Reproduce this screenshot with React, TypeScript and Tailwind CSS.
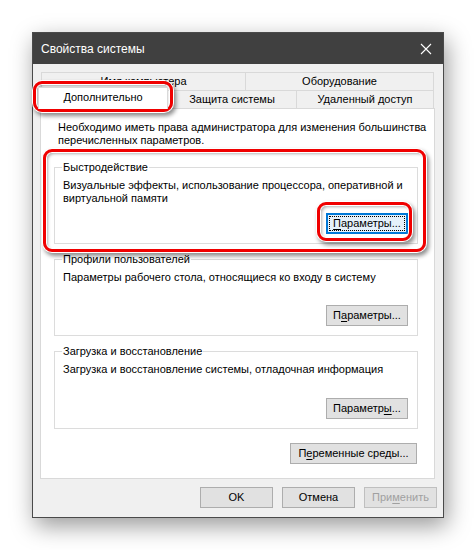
import React from 'react';

const font = { fontFamily: '"Liberation Sans", Arial, sans-serif' };

const Btn = ({
  children,
  className = '',
  focused = false,
  disabled = false,
}: {
  children: React.ReactNode;
  className?: string;
  focused?: boolean;
  disabled?: boolean;
}) => (
  <div
    className={`relative flex items-center justify-center h-[21px] text-[11px] leading-none whitespace-nowrap ${
      focused ? 'border-2 border-[#0078d7] bg-[#e5f1fb]' : 'border border-[#adadad] bg-[#e1e1e1]'
    } ${disabled ? 'text-[#a0a0a0] border-[#bfbfbf] bg-[#cccccc]' : 'text-black'} ${className}`}
  >
    {focused && <span className="absolute inset-[1px] border border-dotted border-black" />}
    <span className="relative">{children}</span>
  </div>
);

const U = ({ children }: { children: React.ReactNode }) => <span className="underline underline-offset-2">{children}</span>;

const Group = ({
  title,
  text,
  button,
  className = '',
}: {
  title: string;
  text: React.ReactNode;
  button: React.ReactNode;
  className?: string;
}) => (
  <div className={`relative w-[364px] border border-[#dcdcdc] flex flex-col pl-[8px] pr-[9px] pt-[11px] pb-[9px] ${className}`}>
    <span className="absolute -top-[8px] left-[7px] px-[1px] bg-white text-[11px] leading-[14px] text-black whitespace-nowrap">{title}</span>
    <div className="text-[11px] leading-[13px] text-black whitespace-nowrap">{text}</div>
    <div className="mt-auto self-end">{button}</div>
  </div>
);

const RedBox = ({ className }: { className: string }) => (
  <div
    className={`absolute rounded-[9px] border-[3px] border-[#f00000] shadow-[0_0_0_1px_#fff,inset_0_0_0_1px_#fff,2px_3px_4px_1px_rgba(0,0,0,0.45),inset_2px_2px_3px_rgba(0,0,0,0.3)] ${className}`}
  />
);

export default function App() {
  return (
    <div className="relative w-[476px] h-[550px] bg-white overflow-hidden" style={font}>
      <div className="ml-[32px] pt-[32px]">
        <div className="w-[412px] h-[486px] border border-[#4a4a4a] bg-[#f0f0f0] flex flex-col shadow-[3px_8px_22px_rgba(0,0,0,0.4)]">
          {/* Title bar */}
          <div className="h-[31px] bg-[#404040] flex items-center justify-between pl-[8px] pr-[10px]">
            <span className="text-white text-[12px]">Свойства системы</span>
            <svg width="12" height="12" viewBox="0 0 12 12" className="mr-[1px]">
              <path d="M1 1L11 11M11 1L1 11" stroke="#ffffff" strokeWidth="1.1" />
            </svg>
          </div>

          {/* Tabs */}
          <div className="pt-[8px] pl-[8px]">
            <div className="flex h-[18px] w-[393px] text-[11px] text-black">
              <div className="w-[204px] border-l border-t border-[#d9d9d9] flex items-center justify-center">Имя компьютера</div>
              <div className="flex-1 border-l border-t border-r border-[#d9d9d9] flex items-center justify-center">Оборудование</div>
            </div>
            <div className="relative flex h-[18px] w-[393px] text-[11px] text-black">
              <div className="w-[126px] border-l border-t border-[#d9d9d9]" />
              <div className="w-[129px] border-l border-t border-[#d9d9d9] flex items-center justify-center">Защита системы</div>
              <div className="flex-1 border-l border-t border-r border-[#d9d9d9] flex items-center justify-center">Удаленный доступ</div>
              <div className="absolute -left-[3px] -top-[3px] w-[130px] h-[22px] bg-white border-l border-t border-r border-[#d9d9d9] z-10 flex items-center justify-center pb-[2px]">
                Дополнительно
              </div>
            </div>
          </div>

          {/* Panel */}
          <div className="ml-[7px] w-[395px] h-[371px] bg-white border border-[#d9d9d9] pl-[13px] pt-[12px] flex flex-col">
            <p className="pl-[4px] text-[11px] leading-[13px] text-black whitespace-nowrap">
              Необходимо иметь права администратора для изменения большинства
              <br />
              перечисленных параметров.
            </p>
            <Group
              className="mt-[20px] h-[77px]"
              title="Быстродействие"
              text={
                <>
                  Визуальные эффекты, использование процессора, оперативной и
                  <br />
                  виртуальной памяти
                </>
              }
              button={
                <Btn focused className="w-[82px]">
                  <U>П</U>араметры...
                </Btn>
              }
            />
            <Group
              className="mt-[15px] h-[77px]"
              title="Профили пользователей"
              text="Параметры рабочего стола, относящиеся ко входу в систему"
              button={
                <Btn className="w-[82px]">
                  П<U>а</U>раметры...
                </Btn>
              }
            />
            <Group
              className="mt-[15px] h-[78px]"
              title="Загрузка и восстановление"
              text="Загрузка и восстановление системы, отладочная информация"
              button={
                <Btn className="w-[82px]">
                  Параметр<U>ы</U>...
                </Btn>
              }
            />
            <div className="w-[364px] flex justify-end mt-[14px] pr-[1px]">
              <Btn className="w-[127px]">
                П<U>е</U>ременные среды...
              </Btn>
            </div>
          </div>

          {/* Dialog buttons */}
          <div className="flex justify-end gap-[9px] mt-[8px] pr-[6px]">
            <Btn className="w-[73px]">OK</Btn>
            <Btn className="w-[73px]">Отмена</Btn>
            <Btn disabled className="w-[73px]">
              При<U>м</U>енить
            </Btn>
          </div>
        </div>
      </div>

      {/* Annotation frames */}
      <RedBox className="left-[33px] top-[81px] w-[140px] h-[31px]" />
      <RedBox className="left-[43px] top-[149px] w-[383px] h-[103px]" />
      <RedBox className="left-[317px] top-[202px] w-[95px] h-[39px]" />
    </div>
  );
}
